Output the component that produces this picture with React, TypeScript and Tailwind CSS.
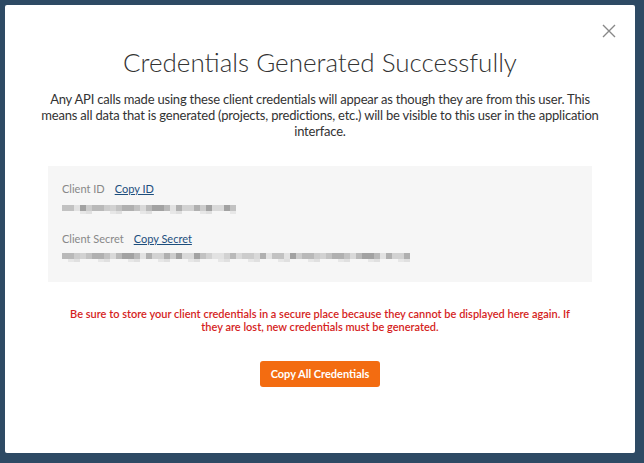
import React from "react";

const shades = [
  "bg-[#c8c8c8]",
  "bg-[#a9a9a9]",
  "bg-[#d6d6d6]",
  "bg-[#bdbdbd]",
  "bg-[#999999]",
  "bg-[#e0e0e0]",
  "bg-[#b3b3b3]",
  "bg-[#cfcfcf]",
];

const lows = ["bg-[#e6e6e6]", "bg-transparent", "bg-transparent", "bg-[#dedede]", "bg-transparent"];

function Blur({ count, seed }: { count: number; seed: number }) {
  const blocks = [];
  for (let i = 0; i < count; i++) {
    const idx = (i * 7 + seed * 3 + ((i * i) % 5)) % shades.length;
    const low = (i * 3 + seed) % lows.length;
    blocks.push(
      <div key={i} className="flex flex-col">
        <div className={`h-[6px] w-[6px] ${shades[idx]}`} />
        <div className={`h-[3px] w-[6px] ${lows[low]}`} />
      </div>
    );
  }
  return <div className="flex opacity-90">{blocks}</div>;
}

export default function App() {
  return (
    <div className="h-[463px] w-[644px] bg-[#2e4a64] p-[5px] pr-[9px] pb-[10px]" style={{ fontFamily: "Lato, 'Open Sans', sans-serif" }}>
      <div className="relative flex h-[448px] w-[630px] flex-col items-center rounded-[2px] bg-white">
        <button className="absolute right-[19px] top-[19px] text-[#888]">
          <svg width="14" height="14" viewBox="0 0 14 14" stroke="currentColor" strokeWidth="1.4" fill="none">
            <path d="M1 1 L13 13 M13 1 L1 13" />
          </svg>
        </button>
        <h1 className="mt-[42px] text-[26px] font-light leading-[30px] text-[#333]">
          Credentials Generated Successfully
        </h1>
        <p className="mt-[14px] whitespace-nowrap text-center text-[13px] leading-[16px] tracking-[-0.2px] text-[#333]">
          Any API calls made using these client credentials will appear as though they are from this user. This
          <br />
          means all data that is generated (projects, predictions, etc.) will be visible to this user in the application
          <br />
          interface.
        </p>
        <div className="mt-[27px] flex h-[116px] w-[544px] flex-col bg-[#f6f6f6] px-[14px] pt-[16px]">
          <div className="flex items-center gap-[10px] text-[11px] leading-[14px]">
            <span className="text-[#888]">Client ID</span>
            <span className="text-[#1d4e7d] underline">Copy ID</span>
          </div>
          <div className="mt-[9px]">
            <Blur count={29} seed={1} />
          </div>
          <div className="mt-[18px] flex items-center gap-[10px] text-[11px] leading-[14px]">
            <span className="text-[#888]">Client Secret</span>
            <span className="text-[#1d4e7d] underline">Copy Secret</span>
          </div>
          <div className="mt-[7px]">
            <Blur count={58} seed={2} />
          </div>
        </div>
        <p className="mt-[25px] w-[520px] text-center text-[11px] font-semibold leading-[13px] text-[#d51e22]">
          Be sure to store your client credentials in a secure place because they cannot be displayed here again. If they are lost, new credentials must be generated.
        </p>
        <button className="mt-[28px] h-[26px] rounded-[3px] bg-[#f36c11] px-[11px] text-[11px] font-bold text-white">
          Copy All Credentials
        </button>
      </div>
    </div>
  );
}
